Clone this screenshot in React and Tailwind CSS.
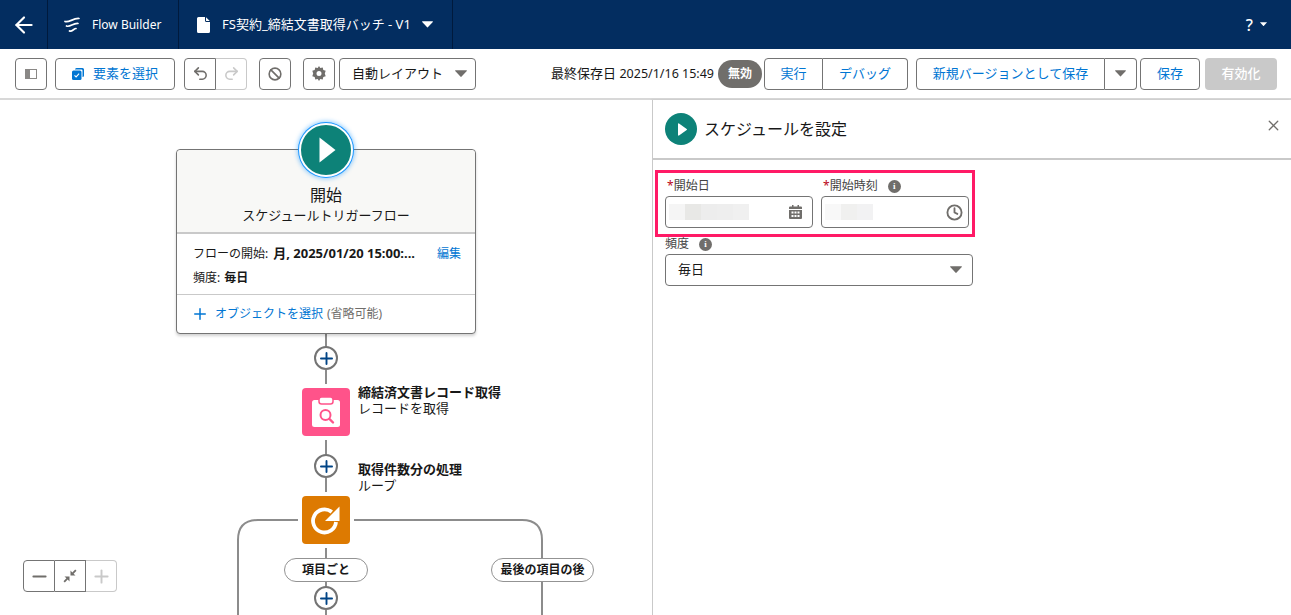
import React from 'react';
import { ArrowLeft, Undo2, Redo2, Ban, Minus, Plus, X, Clock } from 'lucide-react';

const Caret = ({ className = 'fill-[#706e6b]', w = 14 }) => (
  <svg width={w} height={w * 0.6} viewBox="0 0 14 8.4" className={className}>
    <path d="M0.6 0.4h12.8a.5.5 0 0 1 .4.8L7.4 8a.5.5 0 0 1-.8 0L.2 1.2a.5.5 0 0 1 .4-.8z" />
  </svg>
);

const InfoDot = () => (
  <span className="w-[13px] h-[13px] rounded-full bg-[#706e6b] text-white text-[9px] font-bold leading-[13px] text-center font-['Liberation_Serif',serif]">i</span>
);

const IconBtn = ({ children, className = '' }) => (
  <button className={`w-8 h-8 flex items-center justify-center border border-[#747474] rounded bg-white ${className}`}>
    {children}
  </button>
);

const Blur = ({ blocks }) => (
  <div className="flex">
    {blocks.map((c, i) => (
      <div key={i} className={`w-4 h-[16px] ${c}`} />
    ))}
  </div>
);

const Canvas = () => (
  <div className="relative w-[652px] h-full overflow-hidden bg-white">
    {/* connectors */}
    <svg width="652" height="515" className="absolute left-0 top-0" fill="none" stroke="#8c8c8c" strokeWidth="2">
      <path d="M326 234V247M326 270V284M326 340V355M326 378V392M326 448V458M326 482V487M326 510V515" />
      <path d="M298 420H258Q238 420 238 440V515" />
      <path d="M354 420H522Q542 420 542 440V458M542 482V515" />
    </svg>

    {/* start card */}
    <div className="absolute left-[176px] top-[49px] w-[300px] h-[185px] bg-white border border-[#747474] rounded shadow-[0_2px_3px_rgba(0,0,0,0.18)] flex flex-col">
      <div className="h-[84px] bg-[#f8f8f6] border-b-2 border-[#c9c9c9] rounded-t flex flex-col items-center pt-[35px] text-[#181818]">
        <div className="text-[16px] leading-[20px]">開始</div>
        <div className="text-[13px] leading-[20px]">スケジュールトリガーフロー</div>
      </div>
      <div className="h-[61px] border-b border-[#c9c9c9] pl-4 pr-[14px] pt-[8px] text-[12px] text-[#181818]">
        <div className="flex items-center h-[24px]">
          <span>フローの開始:</span>
          <span className="font-bold text-[13px] ml-[5px] whitespace-nowrap">月, 2025/01/20 15:00:...</span>
          <span className="ml-auto text-[#0176d3]">編集</span>
        </div>
        <div className="flex items-center h-[24px]">
          <span>頻度:</span>
          <span className="font-bold ml-1">毎日</span>
        </div>
      </div>
      <div className="flex items-center flex-1 pl-[14px] text-[12px]">
        <Plus size={18} strokeWidth={2} className="text-[#0176d3]" />
        <span className="ml-[6px] text-[#0176d3]">オブジェクトを選択</span>
        <span className="ml-1 text-[#706e6b]">(省略可能)</span>
      </div>
    </div>

    {/* start button */}
    <div className="absolute left-[299px] top-[23px] w-[54px] h-[54px] rounded-full bg-[#0d8278] border-2 border-white ring-1 ring-[#1b96ff] shadow-[0_0_4px_2px_rgba(27,150,255,0.45)] flex items-center justify-center">
      <svg width="17" height="26" viewBox="0 0 17 26" className="fill-white ml-[2px]">
        <path d="M0.5 0.5v25L16.5 13z" />
      </svg>
    </div>

    {/* add buttons */}
    {['top-[246px]', 'top-[354px]', 'top-[486px]'].map((t) => (
      <div key={t} className={`absolute left-[314px] ${t} w-6 h-6 rounded-full bg-white border-2 border-[#747474] flex items-center justify-center`}>
        <Plus size={19} strokeWidth={2.4} className="text-[#014486]" />
      </div>
    ))}

    {/* get records */}
    <div className="absolute left-[302px] top-[288px] w-12 h-12 rounded bg-[#ff538a] flex items-center justify-center">
      <svg width="28" height="30" viewBox="0 0 28 30">
        <rect x="0" y="3" width="28" height="27" rx="2.5" fill="#fff" />
        <rect x="7" y="0" width="14" height="7" rx="2.5" fill="#fff" stroke="#ff538a" strokeWidth="1.5" />
        <circle cx="13.5" cy="18" r="5" fill="none" stroke="#ff538a" strokeWidth="2" />
        <path d="M17.5 22l3.5 3.5" stroke="#ff538a" strokeWidth="2.4" strokeLinecap="round" />
      </svg>
    </div>
    <div className="absolute left-[358px] top-[284px] text-[13px] leading-[16px] text-[#181818]">
      <div className="font-bold">締結済文書レコード取得</div>
      <div>レコードを取得</div>
    </div>

    {/* loop */}
    <div className="absolute left-[358px] top-[361px] text-[13px] leading-[16px] text-[#181818]">
      <div className="font-bold">取得件数分の処理</div>
      <div>ループ</div>
    </div>
    <div className="absolute left-[302px] top-[396px] w-12 h-12 rounded bg-[#dd7a01] flex items-center justify-center">
      <svg width="30" height="30" viewBox="0 0 30 30" fill="none">
        <path d="M25 17a11.5 11.5 0 1 1-4.2-10" stroke="#fff" strokeWidth="3.8" />
        <path d="M28.5 1.5V16H14z" fill="#fff" />
      </svg>
    </div>

    {/* branch labels */}
    <div className="absolute left-[284px] top-[458px] w-[84px] h-6 rounded-full bg-white border border-[#939393] flex items-center justify-center text-[12px] font-bold text-[#181818]">
      項目ごと
    </div>
    <div className="absolute left-[491px] top-[458px] w-[103px] h-6 rounded-full bg-white border border-[#939393] flex items-center justify-center text-[12px] font-bold text-[#181818]">
      最後の項目の後
    </div>

    {/* zoom controls */}
    <div className="absolute left-[23px] top-[460px] flex h-8 rounded bg-white">
      <div className="w-[32px] flex items-center justify-center border border-[#747474] rounded-l">
        <Minus size={21} strokeWidth={2.2} className="text-[#706e6b]" />
      </div>
      <div className="w-[31px] flex items-center justify-center border-y border-r border-[#747474]">
        <svg width="14" height="14" viewBox="0 0 14 14" className="fill-[#706e6b]">
          <path d="M13.5 1.8 10.6 4.7 12.5 6.5H7.5V1.5L9.3 3.4 12.2.5zM.5 12.2 3.4 9.3 1.5 7.5H6.5V12.5L4.7 10.6 1.8 13.5z" />
        </svg>
      </div>
      <div className="w-[31px] flex items-center justify-center border-y border-r border-[#c9c9c9] rounded-r">
        <Plus size={21} strokeWidth={2.2} className="text-[#c9c9c9]" />
      </div>
    </div>
  </div>
);

const Panel = () => (
  <div className="flex-1 h-full bg-white border-l border-[#c9c9c9] shadow-[-1px_0_2px_rgba(0,0,0,0.12)]">
    <div className="relative h-[60px] flex items-center pl-3 border-b-2 border-[#c9c9c9]">
      <div className="w-8 h-8 rounded-full bg-[#0d8278] flex items-center justify-center">
        <svg width="9" height="13" viewBox="0 0 9 13" className="fill-white ml-[2px]">
          <path d="M0 1v11c0 .6.6.9 1 .6l7.7-5.5c.4-.3.4-.9 0-1.2L1 .4C.6.1 0 .4 0 1z" />
        </svg>
      </div>
      <div className="ml-[7px] text-[16px] text-[#181818]">スケジュールを設定</div>
      <X size={17} strokeWidth={1.8} className="absolute right-[9px] top-[17px] text-[#706e6b]" />
    </div>

    <div className="ml-[2px] mt-[10px] w-[320px] h-[67px] border-[3px] border-[#ff1a66] pl-[7px] pt-[4px] flex gap-2">
      <div className="w-[148px]">
        <div className="h-[18px] flex items-center text-[12px] text-[#444444]">
          <span className="text-[#ba0517] ml-[2px]">*</span>開始日
        </div>
        <div className="mt-[1px] h-8 border border-[#747474] rounded flex items-center pl-[3px] pr-[10px] justify-between">
          <Blur blocks={['bg-[#f5f5f5]', 'bg-[#e8e8e6]', 'bg-[#ededed]', 'bg-[#eeeeee]', 'bg-[#f0f0f0]']} />
          <svg width="13" height="14" viewBox="0 0 13 14" className="fill-[#706e6b]">
            <path d="M3 0h1.5v1.5h4V0H10v1.5h2A1 1 0 0 1 13 2.5V4H0V2.5a1 1 0 0 1 1-1h2zM0 5h13v8a1 1 0 0 1-1 1H1a1 1 0 0 1-1-1z" />
            <path d="M2.5 6.5h2v2h-2zM5.5 6.5h2v2h-2zM8.5 6.5h2v2h-2zM2.5 10h2v2h-2zM5.5 10h2v2h-2zM8.5 10h2v2h-2z" fill="#fff" />
          </svg>
        </div>
      </div>
      <div className="w-[148px]">
        <div className="h-[18px] flex items-center text-[12px] text-[#444444]">
          <span className="text-[#ba0517] ml-[2px]">*</span>開始時刻
          <span className="ml-[10px] flex"><InfoDot /></span>
        </div>
        <div className="mt-[1px] h-8 border border-[#747474] rounded flex items-center pl-[3px] pr-[5px] justify-between">
          <Blur blocks={['bg-[#f8f8f8]', 'bg-[#f0f0ef]', 'bg-[#f2f2f3]']} />
          <Clock size={17} strokeWidth={2.6} className="text-[#706e6b]" />
        </div>
      </div>
    </div>

    <div className="ml-3 w-[308px]">
      <div className="h-[14px] mb-[3px] flex items-center text-[12px] text-[#444444]">
        頻度<span className="ml-[10px] flex"><InfoDot /></span>
      </div>
      <div className="h-8 border border-[#747474] rounded flex items-center pl-3 pr-[10px] justify-between text-[13px] text-[#181818]">
        毎日
        <Caret w={12} />
      </div>
    </div>
  </div>
);

export default function App() {
  return (
    <div className="w-full h-[615px] overflow-hidden flex flex-col bg-white font-['Noto_Sans','Noto_Sans_CJK_JP',sans-serif]">
      {/* global header */}
      <header className="h-[49px] shrink-0 bg-[#032d60] flex items-center text-white text-[12px]">
        <div className="w-[48px] h-full flex items-center justify-center border-r border-[#001a3d]">
          <ArrowLeft size={26} strokeWidth={2} />
        </div>
        <div className="w-[131px] h-full flex items-center pl-4 border-r border-[#001a3d]">
          <svg width="16" height="16" viewBox="0 0 16 16" fill="none" stroke="#fff" strokeWidth="1.7" strokeLinecap="round">
            <path d="M1 4.5C5 6 9 1 15 1.5" />
            <path d="M2.5 9C6 10.5 9 6 14 6.5" />
            <path d="M5.5 14C8 15 10 11.5 12 11.5" />
          </svg>
          <span className="ml-[12px]">Flow Builder</span>
        </div>
        <div className="w-[274px] h-full flex items-center pl-[18px] border-r border-[#001a3d]">
          <svg width="13" height="16" viewBox="0 0 13 16" className="fill-white">
            <path d="M1.5 0H8v3.5A1.5 1.5 0 0 0 9.5 5H13v9.5a1.5 1.5 0 0 1-1.5 1.5h-10A1.5 1.5 0 0 1 0 14.5v-13A1.5 1.5 0 0 1 1.5 0zM9 .3 12.8 4H9.6a.6.6 0 0 1-.6-.6z" />
          </svg>
          <span className="ml-[12px] text-[13px] whitespace-nowrap">FS契約_締結文書取得バッチ - V1</span>
          <Caret className="fill-white ml-[11px]" w={11} />
        </div>
        <div className="ml-auto mr-[24px] flex items-center gap-[7px]">
          <span className="text-[16px] font-medium">?</span>
          <Caret className="fill-white" w={7} />
        </div>
      </header>

      {/* toolbar */}
      <div className="h-[51px] shrink-0 border-b-2 border-[#d8d8d8] flex items-center pl-[15px] pr-[14px] text-[13px]">
        <IconBtn>
          <svg width="12" height="10" viewBox="0 0 12 10" fill="none">
            <rect x="0.5" y="0.5" width="11" height="9" fill="#fff" stroke="#8a8886" />
            <rect x="0.5" y="0.5" width="4.5" height="9" fill="#8a8886" />
          </svg>
        </IconBtn>
        <button className="ml-2 w-[120px] h-8 flex items-center justify-center border border-[#747474] rounded text-[#0176d3]">
          <svg width="12" height="12" viewBox="0 0 12 12" className="mr-[9px]">
            <path d="M3 1.5A1.5 1.5 0 0 1 4.5 0h6A1.5 1.5 0 0 1 12 1.5v6A1.5 1.5 0 0 1 10.5 9V2.5a1 1 0 0 0-1-1z" fill="#0176d3" />
            <rect x="0" y="2.5" width="9.5" height="9.5" rx="1.5" fill="#0176d3" />
            <path d="M2.5 7.3l1.6 1.6 3-3.2" stroke="#fff" strokeWidth="1.1" fill="none" />
          </svg>
          要素を選択
        </button>
        <div className="ml-[9px] flex h-8">
          <div className="w-8 flex items-center justify-center border border-[#747474] rounded-l">
            <Undo2 size={17} strokeWidth={2.2} className="text-[#706e6b]" />
          </div>
          <div className="w-[31px] flex items-center justify-center border-y border-r border-[#c9c9c9] rounded-r">
            <Redo2 size={17} strokeWidth={2.2} className="text-[#c9c9c9]" />
          </div>
        </div>
        <IconBtn className="ml-3">
          <Ban size={14} strokeWidth={2.8} className="text-[#706e6b]" />
        </IconBtn>
        <IconBtn className="ml-3">
          <svg width="14" height="15" viewBox="0 0 14 15" fillRule="evenodd" className="fill-[#706e6b]">
            <path d="M7 0l1.3 2.1 2.4-.5.6 2.4 2.4.7L12.8 7.5l.9 2.8-2.4.7-.6 2.4-2.4-.5L7 15l-1.3-2.1-2.4.5-.6-2.4-2.4-.7.9-2.8-.9-2.8L2.7 4l.6-2.4 2.4.5zM7 5a2.5 2.5 0 1 0 0 5 2.5 2.5 0 0 0 0-5z" />
          </svg>
        </IconBtn>
        <button className="ml-1 w-[137px] h-8 flex items-center justify-between pl-3 pr-[8px] border border-[#747474] rounded text-[#181818]">
          自動レイアウト
          <Caret w={12} />
        </button>

        <div className="ml-auto text-[#181818] whitespace-nowrap">最終保存日 <span className="text-[12.5px]">2025/1/16 15:49</span></div>
        <div className="ml-[4px] w-[44px] h-7 rounded-full bg-[#706e6b] text-white text-[12px] font-bold flex items-center justify-center">無効</div>
        <div className="ml-[2px] flex h-8 text-[#0176d3]">
          <div className="w-[59px] flex items-center justify-center border border-[#747474] rounded-l">実行</div>
          <div className="w-[85px] flex items-center justify-center border-y border-r border-[#747474] rounded-r">デバッグ</div>
        </div>
        <div className="ml-2 flex h-8 text-[#0176d3]">
          <div className="w-[189px] flex items-center justify-center border border-[#747474] rounded-l">新規バージョンとして保存</div>
          <div className="w-[32px] flex items-center justify-center border-y border-r border-[#747474] rounded-r">
            <Caret w={11} />
          </div>
        </div>
        <button className="ml-[3px] w-[60px] h-8 flex items-center justify-center border border-[#747474] rounded text-[#0176d3]">保存</button>
        <button className="ml-[5px] w-[72px] h-8 flex items-center justify-center rounded bg-[#c9c9c9] text-white font-medium">有効化</button>
      </div>

      {/* body */}
      <div className="flex-1 flex min-h-0">
        <Canvas />
        <Panel />
      </div>
    </div>
  );
}
